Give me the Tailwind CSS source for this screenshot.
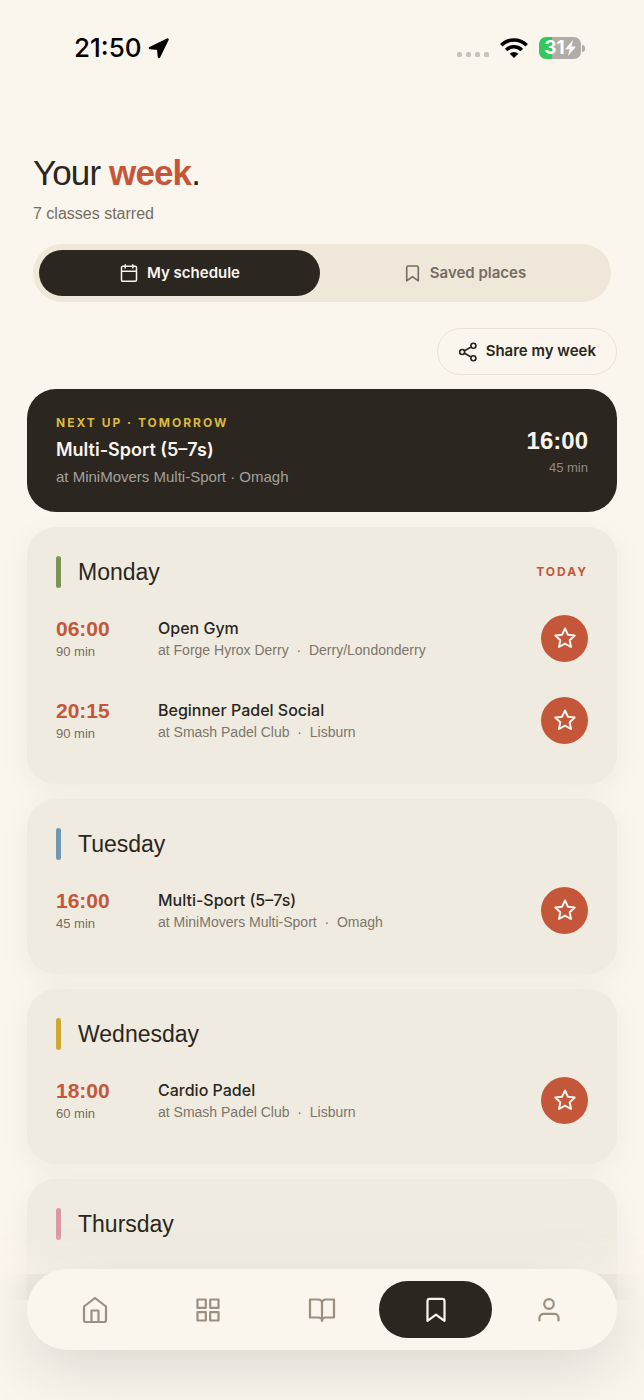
<!DOCTYPE html>
<html lang="en">
<head>
    <meta charset="UTF-8">
    <meta name="viewport" content="width=device-width, initial-scale=1.0">
    <title>Your week</title>
    <script src="https://cdn.jsdelivr.net/npm/@tailwindcss/browser@4"></script>
</head>
<body class="bg-[#faf5ed] text-[#2b2620] font-['Liberation_Sans',Arial,sans-serif]">
    <!-- Shared icons -->
    <svg class="hidden">
        <symbol id="star" viewBox="0 0 24 24">
            <path d="M12 2.500l2.900 6.200 6.800.8-5 4.700 1.300 6.800-6-3.400-6 3.400 1.300-6.800-5-4.700 6.800-.8z"/>
        </symbol>
        <symbol id="bookmark" viewBox="0 0 24 24">
            <path d="M19.300 21.300 12 16l-7.300 5.300V4.500a2 2 0 0 1 2-2h10.600a2 2 0 0 1 2 2z"/>
        </symbol>
    </svg>

    <div class="flex flex-col h-screen">
        <!-- Status bar -->
        <div class="flex items-center justify-between h-24 pl-[74px] pr-[59px] text-black font-['Inter',sans-serif] shrink-0">
            <div class="flex items-center gap-1">
                <span class="text-[26px] leading-8 font-medium">21:50</span>
                <svg class="w-6 h-6" viewBox="0 0 24 24" fill="currentColor" stroke="currentColor" stroke-width="2.500" stroke-linejoin="round"><path d="M21.500 3.500 13 21l-.8-8.200L4 12z"/></svg>
            </div>
            <div class="flex items-center">
                <svg class="w-8 h-[22px]" viewBox="0 0 32 22" fill="#c8c4bd">
                    <rect x="0" y="15" width="5" height="5" rx="1.500"/><rect x="9" y="15" width="5" height="5" rx="1.500"/><rect x="18" y="15" width="5" height="5" rx="1.500"/><rect x="27" y="15" width="5" height="5" rx="1.500"/>
                </svg>
                <svg class="w-7 h-[22px] ml-[11px]" viewBox="0 0 28 22" fill="none" stroke="currentColor" stroke-width="3.600">
                    <path d="M1.300 8.200a18 18 0 0 1 25.400 0"/>
                    <path d="M6.200 13a11 11 0 0 1 15.600 0"/>
                    <path d="M14 21l-4.300-4.300a6 6 0 0 1 8.600 0z" fill="currentColor" stroke="none"/>
                </svg>
                <div class="flex items-center ml-[11px]">
                    <div class="flex items-center justify-center w-[42px] h-[22px] rounded-[7px] bg-linear-to-r from-[#34c759] from-31% to-[#b0aca6] to-31% text-white">
                        <span class="text-[19px] leading-[22px] font-bold">31</span>
                        <svg class="w-[11px] h-4" viewBox="0 0 11 16" fill="currentColor"><path d="M8 0 0 9.200h4.600L3 16l8-9.400H6.400z"/></svg>
                    </div>
                    <div class="w-[3px] h-[7px] ml-px rounded-r-full bg-[#b0aca6]"></div>
                </div>
            </div>
        </div>

        <main class="flex-1 overflow-y-auto [scrollbar-width:none] px-[27px] pt-14 mb-[100px]">
            <header class="px-[6px]">
                <h1 class="text-[35px] leading-[42px] tracking-tight">Your <strong class="font-bold text-[#c4573a]">week</strong>.</h1>
                <p class="mt-2 text-base leading-6 text-[#756c60]">7 classes starred</p>
                <div class="grid grid-cols-2 gap-1 mt-[18px] p-[6px] rounded-full bg-[#efe7da] font-['Inter',sans-serif]">
                    <button class="flex items-center justify-center gap-2 h-[46px] rounded-full bg-[#2b2620] text-[#faf5ed] text-[15px] font-semibold">
                        <svg class="w-5 h-5" viewBox="0 0 24 24" fill="none" stroke="currentColor" stroke-width="1.800" stroke-linejoin="round"><rect x="3" y="4" width="18" height="18" rx="1.500"/><path d="M3 10h18M7.500 1.500v5M16.500 1.500v5"/></svg>
                        My schedule
                    </button>
                    <button class="flex items-center justify-center gap-2 h-[46px] rounded-full text-[#756c60] text-[15px] font-semibold">
                        <svg class="w-[19px] h-[19px]" fill="none" stroke="currentColor" stroke-width="2" stroke-linejoin="round"><use href="#bookmark"/></svg>
                        Saved places
                    </button>
                </div>
            </header>

            <div class="flex justify-end mt-[26px]">
                <button class="flex items-center gap-2 h-[47px] px-5 rounded-full border border-[#e8e2d8] font-['Inter',sans-serif] text-[15px] font-semibold">
                    <svg class="w-5 h-5" viewBox="0 0 24 24" fill="none" stroke="currentColor" stroke-width="2"><circle cx="18.500" cy="4.500" r="3"/><circle cx="5" cy="12" r="3"/><circle cx="18.500" cy="19.500" r="3"/><path d="m7.700 10.500 8.100-4.500M7.700 13.500l8.100 4.500"/></svg>
                    Share my week
                </button>
            </div>

            <section class="flex items-center justify-between mt-[14px] px-[29px] pt-[23px] pb-[25px] rounded-[29px] bg-[#2b2620] text-[#faf5ed]">
                <div>
                    <p class="font-['Inter',sans-serif] text-xs leading-[22px] font-bold tracking-[2px] text-[#dcb93c]">NEXT UP · TOMORROW</p>
                    <h2 class="font-['Inter',sans-serif] text-lg leading-8 font-semibold">Multi-Sport (5–7s)</h2>
                    <p class="text-[15px] leading-[21px] text-[#a5a19a]">at MiniMovers Multi-Sport · Omagh</p>
                </div>
                <div class="pt-1 text-right">
                    <p class="text-2xl leading-8 font-bold">16:00</p>
                    <p class="text-[13px] leading-[22px] text-[#8f8a83]">45 min</p>
                </div>
            </section>

            <div class="flex flex-col gap-[15px] mt-[15px]">
                <section class="px-[29px] pt-[29px] pb-[23px] rounded-[29px] bg-[#efebe0] shadow-[0_8px_32px_rgba(43,38,32,0.05)]">
                    <div class="flex items-center h-8 mb-[9px]">
                        <span class="w-[5px] h-8 rounded-full bg-[#7d9354]"></span>
                        <h2 class="ml-[17px] text-[23px] leading-8">Monday</h2>
                        <span class="ml-auto font-['Inter',sans-serif] text-xs font-bold tracking-[2px] text-[#c4573a]">TODAY</span>
                    </div>
                    <article class="flex items-center h-[82px]">
                        <div class="w-[102px] pt-1">
                            <p class="text-[21px] leading-6 font-bold text-[#c4573a]">06:00</p>
                            <p class="text-[13px] leading-[22px] text-[#756c60]">90 min</p>
                        </div>
                        <div class="flex-1 pt-[2px]">
                            <h3 class="font-['Inter',sans-serif] text-base leading-[22px] font-medium">Open Gym</h3>
                            <p class="text-[14px] leading-[22px] text-[#7d756a]">at Forge Hyrox Derry&nbsp; ·&nbsp; Derry/Londonderry</p>
                        </div>
                        <button aria-label="Unstar Open Gym" class="flex items-center justify-center w-[47px] h-[47px] rounded-full bg-[#c4573a] text-[#faf5ed]">
                            <svg class="w-6 h-6" fill="none" stroke="currentColor" stroke-width="2" stroke-linejoin="round"><use href="#star"/></svg>
                        </button>
                    </article>
                    <article class="flex items-center h-[82px]">
                        <div class="w-[102px] pt-1">
                            <p class="text-[21px] leading-6 font-bold text-[#c4573a]">20:15</p>
                            <p class="text-[13px] leading-[22px] text-[#756c60]">90 min</p>
                        </div>
                        <div class="flex-1 pt-[2px]">
                            <h3 class="font-['Inter',sans-serif] text-base leading-[22px] font-medium">Beginner Padel Social</h3>
                            <p class="text-[14px] leading-[22px] text-[#7d756a]">at Smash Padel Club&nbsp; ·&nbsp; Lisburn</p>
                        </div>
                        <button aria-label="Unstar Beginner Padel Social" class="flex items-center justify-center w-[47px] h-[47px] rounded-full bg-[#c4573a] text-[#faf5ed]">
                            <svg class="w-6 h-6" fill="none" stroke="currentColor" stroke-width="2" stroke-linejoin="round"><use href="#star"/></svg>
                        </button>
                    </article>
                </section>

                <section class="px-[29px] pt-[29px] pb-[23px] rounded-[29px] bg-[#efebe0] shadow-[0_8px_32px_rgba(43,38,32,0.05)]">
                    <div class="flex items-center h-8 mb-[9px]">
                        <span class="w-[5px] h-8 rounded-full bg-[#6f98b0]"></span>
                        <h2 class="ml-[17px] text-[23px] leading-8">Tuesday</h2>
                    </div>
                    <article class="flex items-center h-[82px]">
                        <div class="w-[102px] pt-1">
                            <p class="text-[21px] leading-6 font-bold text-[#c4573a]">16:00</p>
                            <p class="text-[13px] leading-[22px] text-[#756c60]">45 min</p>
                        </div>
                        <div class="flex-1 pt-[2px]">
                            <h3 class="font-['Inter',sans-serif] text-base leading-[22px] font-medium">Multi-Sport (5–7s)</h3>
                            <p class="text-[14px] leading-[22px] text-[#7d756a]">at MiniMovers Multi-Sport&nbsp; ·&nbsp; Omagh</p>
                        </div>
                        <button aria-label="Unstar Multi-Sport" class="flex items-center justify-center w-[47px] h-[47px] rounded-full bg-[#c4573a] text-[#faf5ed]">
                            <svg class="w-6 h-6" fill="none" stroke="currentColor" stroke-width="2" stroke-linejoin="round"><use href="#star"/></svg>
                        </button>
                    </article>
                </section>

                <section class="px-[29px] pt-[29px] pb-[23px] rounded-[29px] bg-[#efebe0] shadow-[0_8px_32px_rgba(43,38,32,0.05)]">
                    <div class="flex items-center h-8 mb-[9px]">
                        <span class="w-[5px] h-8 rounded-full bg-[#cba932]"></span>
                        <h2 class="ml-[17px] text-[23px] leading-8">Wednesday</h2>
                    </div>
                    <article class="flex items-center h-[82px]">
                        <div class="w-[102px] pt-1">
                            <p class="text-[21px] leading-6 font-bold text-[#c4573a]">18:00</p>
                            <p class="text-[13px] leading-[22px] text-[#756c60]">60 min</p>
                        </div>
                        <div class="flex-1 pt-[2px]">
                            <h3 class="font-['Inter',sans-serif] text-base leading-[22px] font-medium">Cardio Padel</h3>
                            <p class="text-[14px] leading-[22px] text-[#7d756a]">at Smash Padel Club&nbsp; ·&nbsp; Lisburn</p>
                        </div>
                        <button aria-label="Unstar Cardio Padel" class="flex items-center justify-center w-[47px] h-[47px] rounded-full bg-[#c4573a] text-[#faf5ed]">
                            <svg class="w-6 h-6" fill="none" stroke="currentColor" stroke-width="2" stroke-linejoin="round"><use href="#star"/></svg>
                        </button>
                    </article>
                </section>

                <section class="px-[29px] pt-[29px] pb-[105px] rounded-[29px] bg-[#efebe0] shadow-[0_8px_32px_rgba(43,38,32,0.05)]">
                    <div class="flex items-center h-8 mb-[9px]">
                        <span class="w-[5px] h-8 rounded-full bg-[#d99ba1]"></span>
                        <h2 class="ml-[17px] text-[23px] leading-8">Thursday</h2>
                    </div>
                </section>
            </div>
        </main>
    </div>

    <!-- Fade above the tab bar -->
    <div class="fixed inset-x-0 bottom-[126px] h-10 bg-linear-to-b from-[#faf5ed]/0 to-[#faf5ed]/85 pointer-events-none"></div>

    <nav class="fixed inset-x-[27px] bottom-[50px] grid grid-cols-5 px-[11px] py-3 rounded-full bg-[#faf5ed] shadow-[0_16px_64px_rgba(43,38,32,0.15)] text-[#9b8f80]">
        <a href="#home" aria-label="Home" class="flex items-center justify-center h-[57px] rounded-full">
            <svg class="w-7 h-7" viewBox="0 0 28 28" fill="none" stroke="currentColor" stroke-width="2.200" stroke-linejoin="round"><path d="M3 10.500 14 2l11 8.500V24a2 2 0 0 1-2 2H5a2 2 0 0 1-2-2z"/><path d="M10.500 26V14.500h7V26"/></svg>
        </a>
        <a href="#browse" aria-label="Browse" class="flex items-center justify-center h-[57px] rounded-full">
            <svg class="w-7 h-7" viewBox="0 0 28 28" fill="none" stroke="currentColor" stroke-width="2.200" stroke-linejoin="round"><rect x="3.500" y="3.500" width="8.300" height="8.300"/><rect x="16.200" y="3.500" width="8.300" height="8.300"/><rect x="3.500" y="16.200" width="8.300" height="8.300"/><rect x="16.200" y="16.200" width="8.300" height="8.300"/></svg>
        </a>
        <a href="#guide" aria-label="Guide" class="flex items-center justify-center h-[57px] rounded-full">
            <svg class="w-7 h-7" viewBox="0 0 28 28" fill="none" stroke="currentColor" stroke-width="2.200" stroke-linecap="round" stroke-linejoin="round"><path d="M2 3.500h8.500A3.500 3.500 0 0 1 14 7v18a3.500 3.500 0 0 0-3.500-3.500H2zM26 3.500h-8.500A3.500 3.500 0 0 0 14 7v18a3.500 3.500 0 0 1 3.500-3.500H26z"/></svg>
        </a>
        <a href="#week" aria-label="My week" class="flex items-center justify-center h-[57px] rounded-full bg-[#2b2620] text-[#faf5ed]">
            <svg class="w-7 h-7" fill="none" stroke="currentColor" stroke-width="1.900" stroke-linejoin="round"><use href="#bookmark"/></svg>
        </a>
        <a href="#profile" aria-label="Profile" class="flex items-center justify-center h-[57px] rounded-full">
            <svg class="w-7 h-7" viewBox="0 0 28 28" fill="none" stroke="currentColor" stroke-width="2.200" stroke-linecap="round"><circle cx="14" cy="8" r="4.800"/><path d="M4.500 24.500v-2.700a4 4 0 0 1 4-4h11a4 4 0 0 1 4 4v2.700"/></svg>
        </a>
    </nav>
</body>
</html>
